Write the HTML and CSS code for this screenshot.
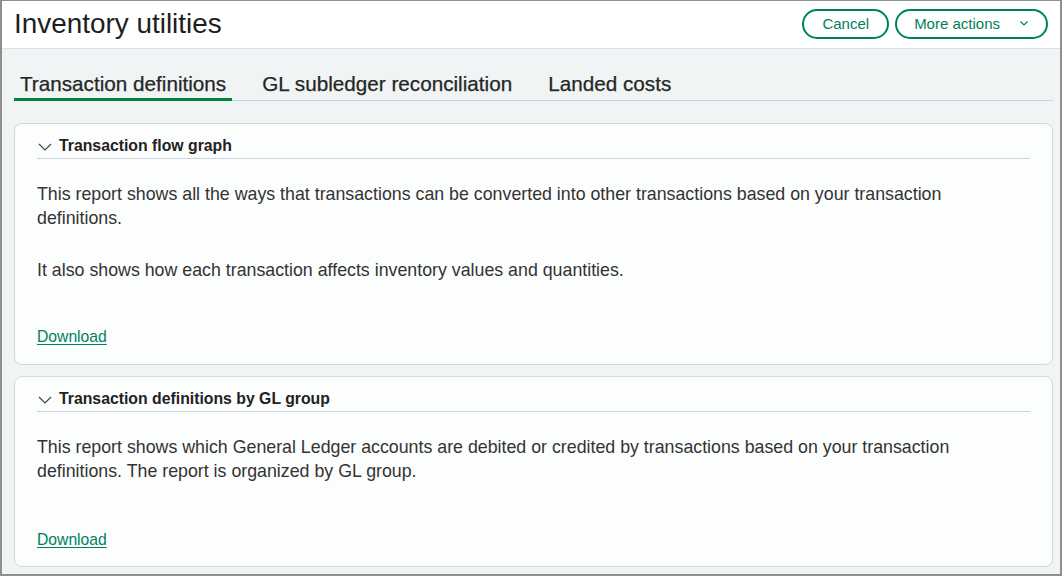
FILE: index.html
```html
<!DOCTYPE html>
<html lang="en">
<head>
<meta charset="utf-8">
<title>Inventory utilities</title>
<link rel="stylesheet" href="styles.css">
</head>
<body>
<div class="frame">
  <header class="topbar">
    <h1 class="title">Inventory utilities</h1>
    <div class="actions">
      <button class="btn">Cancel</button>
      <button class="btn btn-menu">More actions
        <svg class="btn-chev" width="8" height="5" viewBox="0 0 8 5"><path d="M0.5 0.5 L4 4 L7.5 0.5" fill="none" stroke="#00815d" stroke-width="1.2"/></svg>
      </button>
    </div>
  </header>
  <main class="content">
    <nav class="tabs">
      <a class="tab tab-active">Transaction definitions</a>
      <a class="tab">GL subledger reconciliation</a>
      <a class="tab">Landed costs</a>
    </nav>
    <section class="card">
      <div class="card-head">
        <svg class="chev" width="14" height="8" viewBox="0 0 14 8"><path d="M1 1 L7 7 L13 1" fill="none" stroke="#444" stroke-width="1.2"/></svg>
        <h2 class="card-title">Transaction flow graph</h2>
      </div>
      <div class="card-body">
        <p class="para">This report shows all the ways that transactions can be converted into other transactions based on your transaction definitions.</p>
        <p class="para">It also shows how each transaction affects inventory values and quantities.</p>
        <a class="link">Download</a>
      </div>
    </section>
    <section class="card card-last">
      <div class="card-head">
        <svg class="chev" width="14" height="8" viewBox="0 0 14 8"><path d="M1 1 L7 7 L13 1" fill="none" stroke="#444" stroke-width="1.2"/></svg>
        <h2 class="card-title">Transaction definitions by GL group</h2>
      </div>
      <div class="card-body card-body-tall">
        <p class="para">This report shows which General Ledger accounts are debited or credited by transactions based on your transaction definitions. The report is organized by GL group.</p>
        <a class="link">Download</a>
      </div>
    </section>
  </main>
</div>
</body>
</html>
```

FILE: styles.css
```css
* { box-sizing: border-box; }
html, body { margin: 0; padding: 0; }
body {
  font-family: "Liberation Sans", Arial, sans-serif;
  color: #2b2b2b;
  background: #ffffff;
}
.frame {
  width: 1062px;
  height: 576px;
  border: 2px solid #8f8f8f;
  border-top-width: 1px;
  background: #f0f4f4;
  overflow: hidden;
}
.topbar {
  height: 48px;
  background: #ffffff;
  border-bottom: 1px solid #dde2e5;
  display: flex;
  align-items: center;
  justify-content: space-between;
  padding: 0 12px 0 12px;
}
.title {
  margin: 0;
  font-size: 27.9px;
  font-weight: 400;
  color: #1e1e1e;
  line-height: 32px;
  position: relative;
  top: -1px;
}
.actions {
  display: flex;
  gap: 6px;
  position: relative;
  top: -1px;
}
.btn {
  height: 30px;
  border: 2px solid #00815d;
  border-radius: 16px;
  background: #ffffff;
  color: #00815d;
  font-family: "Liberation Sans", Arial, sans-serif;
  font-size: 15px;
  padding: 0 18px;
  display: flex;
  align-items: center;
}
.btn-menu { gap: 20px; padding-left: 17px; padding-right: 18px; }
.btn-chev { display: block; }
.content {
  padding: 23px 7px 0 12px;
}
.tabs {
  display: flex;
  gap: 24px;
  border-bottom: 1px solid #cdd3d8;
  margin-bottom: 22px;
}
.tab {
  font-size: 20.7px;
  line-height: 24px;
  color: #262626;
  padding: 0 6px 2px;
  border-bottom: 3px solid transparent;
  margin-bottom: -1px;
  -webkit-text-stroke: 0.25px #262626;
}
.tab-active { border-bottom-color: #00843d; }
.card {
  background: #fcfdfd;
  border: 1px solid #d3d9de;
  border-radius: 8px;
  padding: 12px 22px 17px;
  margin-bottom: 11px;
}
.card-last { padding-bottom: 16px; }
.card-head {
  display: flex;
  align-items: center;
  gap: 7px;
  padding: 0 0 2px 1px;
  border-bottom: 1px solid #ccd4db;
}
.chev { display: block; margin-top: 2px; }
.card-title {
  margin: 0;
  font-size: 15.8px;
  font-weight: 700;
  line-height: 20px;
  color: #222;
}
.card-body {
  padding-top: 23px;
}
.para {
  margin: 0 0 28px;
  font-size: 17.8px;
  line-height: 24px;
  color: #333333;
}
.para:last-of-type { margin-bottom: 45px; }
.card-body-tall .para:last-of-type { margin-bottom: 47px; }
.link {
  display: inline-block;
  font-size: 15.7px;
  line-height: 20px;
  color: #00815d;
  text-decoration: underline;
  text-underline-offset: 2px;
}
```
